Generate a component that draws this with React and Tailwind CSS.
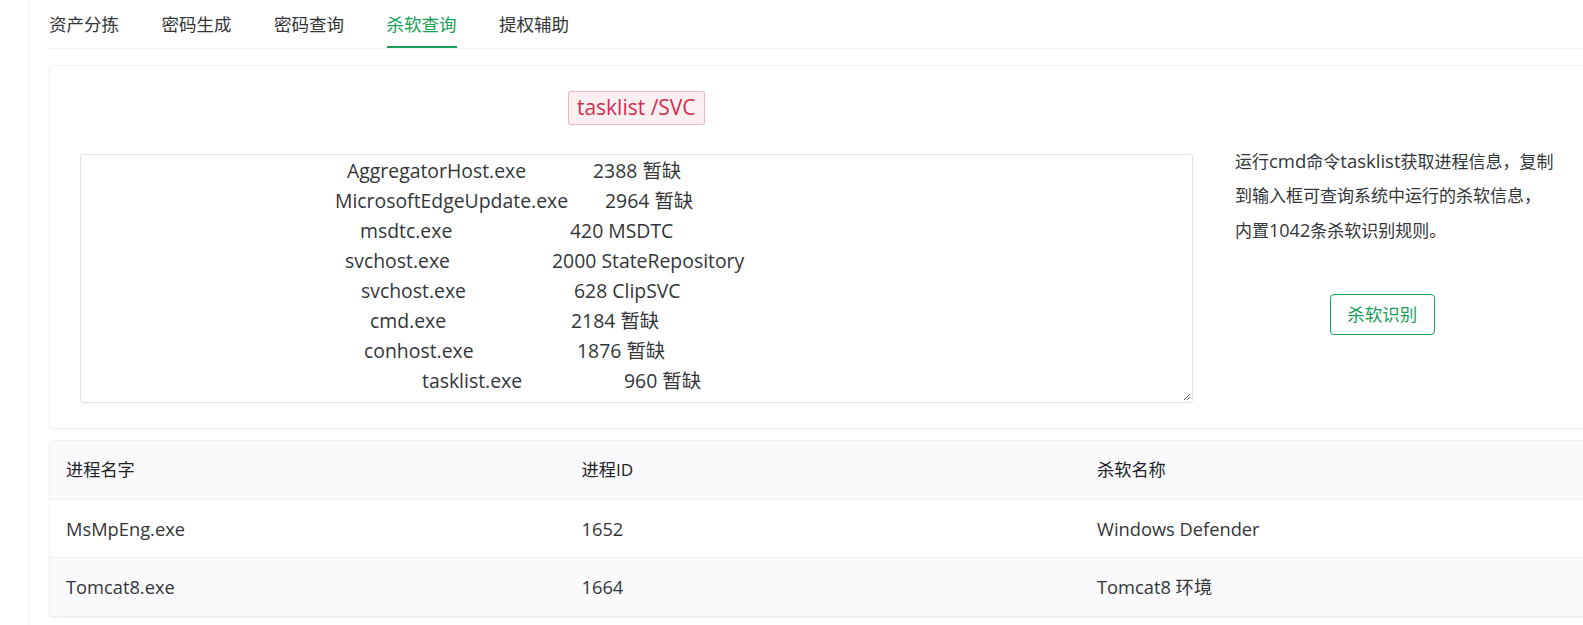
const tabs = ['资产分拣', '密码生成', '密码查询', '杀软查询', '提权辅助'];

// x offsets measured from the inner left edge of the text box
const taskLines = [
  { name: 'AggregatorHost.exe', nameX: 266, restX: 512, rest: '2388 暂缺' },
  { name: 'MicrosoftEdgeUpdate.exe', nameX: 254, restX: 524, rest: '2964 暂缺' },
  { name: 'msdtc.exe', nameX: 279, restX: 489, rest: '420 MSDTC' },
  { name: 'svchost.exe', nameX: 264, restX: 471, rest: '2000 StateRepository' },
  { name: 'svchost.exe', nameX: 280, restX: 493, rest: '628 ClipSVC' },
  { name: 'cmd.exe', nameX: 289, restX: 490, rest: '2184 暂缺' },
  { name: 'conhost.exe', nameX: 283, restX: 496, rest: '1876 暂缺' },
  { name: 'tasklist.exe', nameX: 341, restX: 543, rest: '960 暂缺' }
];

const results = [
  { name: 'MsMpEng.exe', pid: '1652', av: 'Windows Defender' },
  { name: 'Tomcat8.exe', pid: '1664', av: 'Tomcat8 环境' }
];

const font = "font-['Open_Sans','Noto_Sans_CJK_SC',sans-serif]";

export default function App() {
  return (
    <div className={`flex h-[625px] w-full overflow-hidden bg-white text-[#333639] ${font}`}>
      <div className="w-[30px] shrink-0 border-r border-[#efeff5]" />

      <div className="w-[1560px] shrink-0 pl-[19px]">
        {/* tabs */}
        <div className="flex h-[49px] gap-[42.5px] border-b border-[#efeff5]">
          {tabs.map((tab) => (
            <div
              key={tab}
              className={
                tab === '杀软查询'
                  ? 'flex h-[48px] items-center border-b-2 border-[#18a058] pt-[2px] text-[17.5px] text-[#18a058]'
                  : 'flex h-[48px] items-center border-b-2 border-transparent pt-[2px] text-[17.5px]'
              }
            >
              {tab}
            </div>
          ))}
        </div>

        {/* input card */}
        <div className="mt-[15.5px] flex items-start rounded-[3px] border border-[#efeff5] px-[30px] pt-[25px] pb-[25px]">
          <div className="flex w-[1112.5px] shrink-0 flex-col items-center">
            <span className="flex h-[34.5px] items-center rounded-[3px] border border-[rgba(208,48,80,0.3)] bg-[rgba(208,48,80,0.08)] px-[8px] text-[21px] text-[#d03050]">
              tasklist /SVC
            </span>
            <div className="relative mt-[29px] h-[249px] w-full overflow-hidden rounded-[3px] border border-[#e0e0e6] pt-[1px] text-[19.4px]">
              {taskLines.map((l, i) => (
                <div key={i} className="flex h-[30px] items-center whitespace-nowrap">
                  <span className="shrink-0" style={{ paddingLeft: l.nameX, width: l.restX }}>
                    {l.name}
                  </span>
                  <span>{l.rest}</span>
                </div>
              ))}
              <svg className="absolute right-[1px] bottom-[1px]" width="9" height="9" viewBox="0 0 9 9">
                <path d="M8 2 L2 8 M8 5 L5 8" stroke="#555" strokeWidth="1" fill="none" />
              </svg>
            </div>
          </div>

          <div className="ml-[42.5px] flex w-[295px] shrink-0 flex-col pt-[53.5px]">
            <p className="whitespace-nowrap text-[17px] leading-[34px]">
              运行<span className="text-[18.5px]">cmd</span>命令<span className="text-[18.5px]">tasklist</span>获取进程信息，复制
              <br />
              到输入框可查询系统中运行的杀软信息，
              <br />
              内置<span className="text-[18px]">1042</span>条杀软识别规则。
            </p>
            <button
              type="button"
              className="mt-[45.5px] ml-[95px] h-[41px] w-[104.5px] rounded-[4px] border border-[#18a058] text-[17.5px] text-[#18a058]"
            >
              杀软识别
            </button>
          </div>
        </div>

        {/* result table */}
        <div className="mt-[10.5px] overflow-hidden rounded-[3px] border border-[#efeff5]">
          <div className="flex h-[59px] items-center border-b border-[#efeff5] bg-[#fafafc] text-[17.2px] text-[#1f2225]">
            <div className="w-[515.5px] shrink-0 pl-[16px]">进程名字</div>
            <div className="w-[515.5px] shrink-0 pl-[16px]">进程ID</div>
            <div className="w-[515.5px] shrink-0 pl-[16px]">杀软名称</div>
          </div>
          {results.map((r, i) => (
            <div
              key={r.name}
              className={
                i % 2 === 1
                  ? 'flex h-[58.5px] items-center border-b border-[#efeff5] bg-[#fafafc] text-[18.3px]'
                  : 'flex h-[58.5px] items-center border-b border-[#efeff5] bg-white text-[18.3px]'
              }
            >
              <div className="w-[515.5px] shrink-0 pl-[16px]">{r.name}</div>
              <div className="w-[515.5px] shrink-0 pl-[16px]">{r.pid}</div>
              <div className="w-[515.5px] shrink-0 pl-[16px]">{r.av}</div>
            </div>
          ))}
        </div>
      </div>
    </div>
  );
}
